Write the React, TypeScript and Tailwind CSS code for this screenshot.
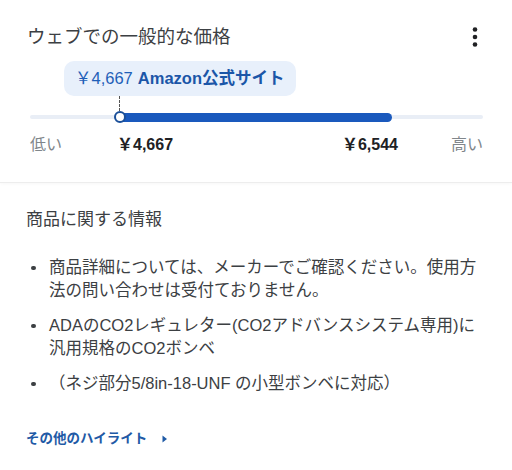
import { useState } from "react"

const font = "font-['Liberation_Sans','Noto_Sans_CJK_JP',sans-serif]"

const bullets = [
    "商品詳細については、メーカーでご確認ください。使用方法の問い合わせは受付ておりません。",
    "ADAのCO2レギュレター(CO2アドバンスシステム専用)に汎用規格のCO2ボンベ",
    "（ネジ部分5/8in-18-UNF の小型ボンベに対応）",
]

function MoreIcon() {
    return <svg width="6" height="22" viewBox="0 0 6 22" className="text-[#202124]">
        <circle cx="3" cy="3.5" r="2.3" fill="currentColor" />
        <circle cx="3" cy="11" r="2.3" fill="currentColor" />
        <circle cx="3" cy="18.5" r="2.3" fill="currentColor" />
    </svg>
}

export default function App() {
    const [low] = useState(4667)
    const [high] = useState(6544)
    const fmt = (n: number) => "￥" + n.toLocaleString("en-US")

    return <div className={`w-[512px] h-[470px] bg-white overflow-hidden ${font}`}>
        {/* price range */}
        <div className="px-[28px] pt-[24px] pb-[27px] border-b border-[#ededed] shadow-[0_1px_3px_rgba(0,0,0,0.03)]">
            <div className="flex items-center justify-between h-[26px]">
                <h2 className="text-[18.5px] leading-[26px] text-[#3c4043] -ml-[1px]">ウェブでの一般的な価格</h2>
                <div className="mr-[6px]"><MoreIcon /></div>
            </div>

            <div className="mt-[11px] ml-[36px] w-fit h-[35px] pl-[11px] pr-[12px] rounded-[10px] bg-[#e8f0fb] flex items-center text-[16.5px] text-[#1f5fb8]">
                <span>{fmt(low)}</span>
                <span className="font-bold ml-[5px] text-[#1b56a8]">Amazon公式サイト</span>
            </div>
            <div className="ml-[91px] h-[15px] w-0 border-l-[1.5px] border-dashed border-[#555]" />

            <div className="relative ml-[2px] mr-[1px] h-[12px]">
                <div className="absolute left-0 right-0 top-[4px] h-[4px] rounded-full bg-[#e9eef6]" />
                <div className="absolute left-[88px] w-[274px] top-[1.5px] h-[9px] rounded-full bg-[#1a59bd]" />
                <div className="absolute left-[84px] top-0 w-[12px] h-[12px] rounded-full bg-white border-2 border-[#1a4f99]" />
            </div>

            <div className="mt-[12px] flex items-center h-[20px] ml-[2px] mr-[1px] text-[16px]">
                <span className="text-[#80868b] w-[32px]">低い</span>
                <span className="ml-[55px] font-bold text-[#202124]">{fmt(low)}</span>
                <span className="ml-auto font-bold text-[#202124]">{fmt(high)}</span>
                <span className="ml-[53px] text-[#80868b]">高い</span>
            </div>
        </div>

        {/* product info */}
        <div className="px-[26px] pt-[25px]">
            <h3 className="text-[17px] leading-[24px] text-[#3c4043]">商品に関する情報</h3>
            <ul className="mt-[24px] flex flex-col gap-[12px]">
                {bullets.map((b, i) => <li key={i} className="flex text-[16.5px] leading-[23px] text-[#3c4043]">
                    <span className="w-[23px] shrink-0 flex items-start pt-[9.5px] pl-[5px]">
                        <span className="block w-[4.5px] h-[4.5px] rounded-full bg-[#3c4043]" />
                    </span>
                    <span className="pr-[4px]">{b}</span>
                </li>)}
            </ul>
            <a className="mt-[34px] flex items-center h-[20px] text-[13.5px] font-bold text-[#1f5aa6]">
                その他のハイライト
                <svg width="8" height="10" viewBox="0 0 8 10" className="ml-[14px]">
                    <path d="M1.5 1.5 L6 5 L1.5 8.5 Z" fill="currentColor" />
                </svg>
            </a>
        </div>
    </div>
}
